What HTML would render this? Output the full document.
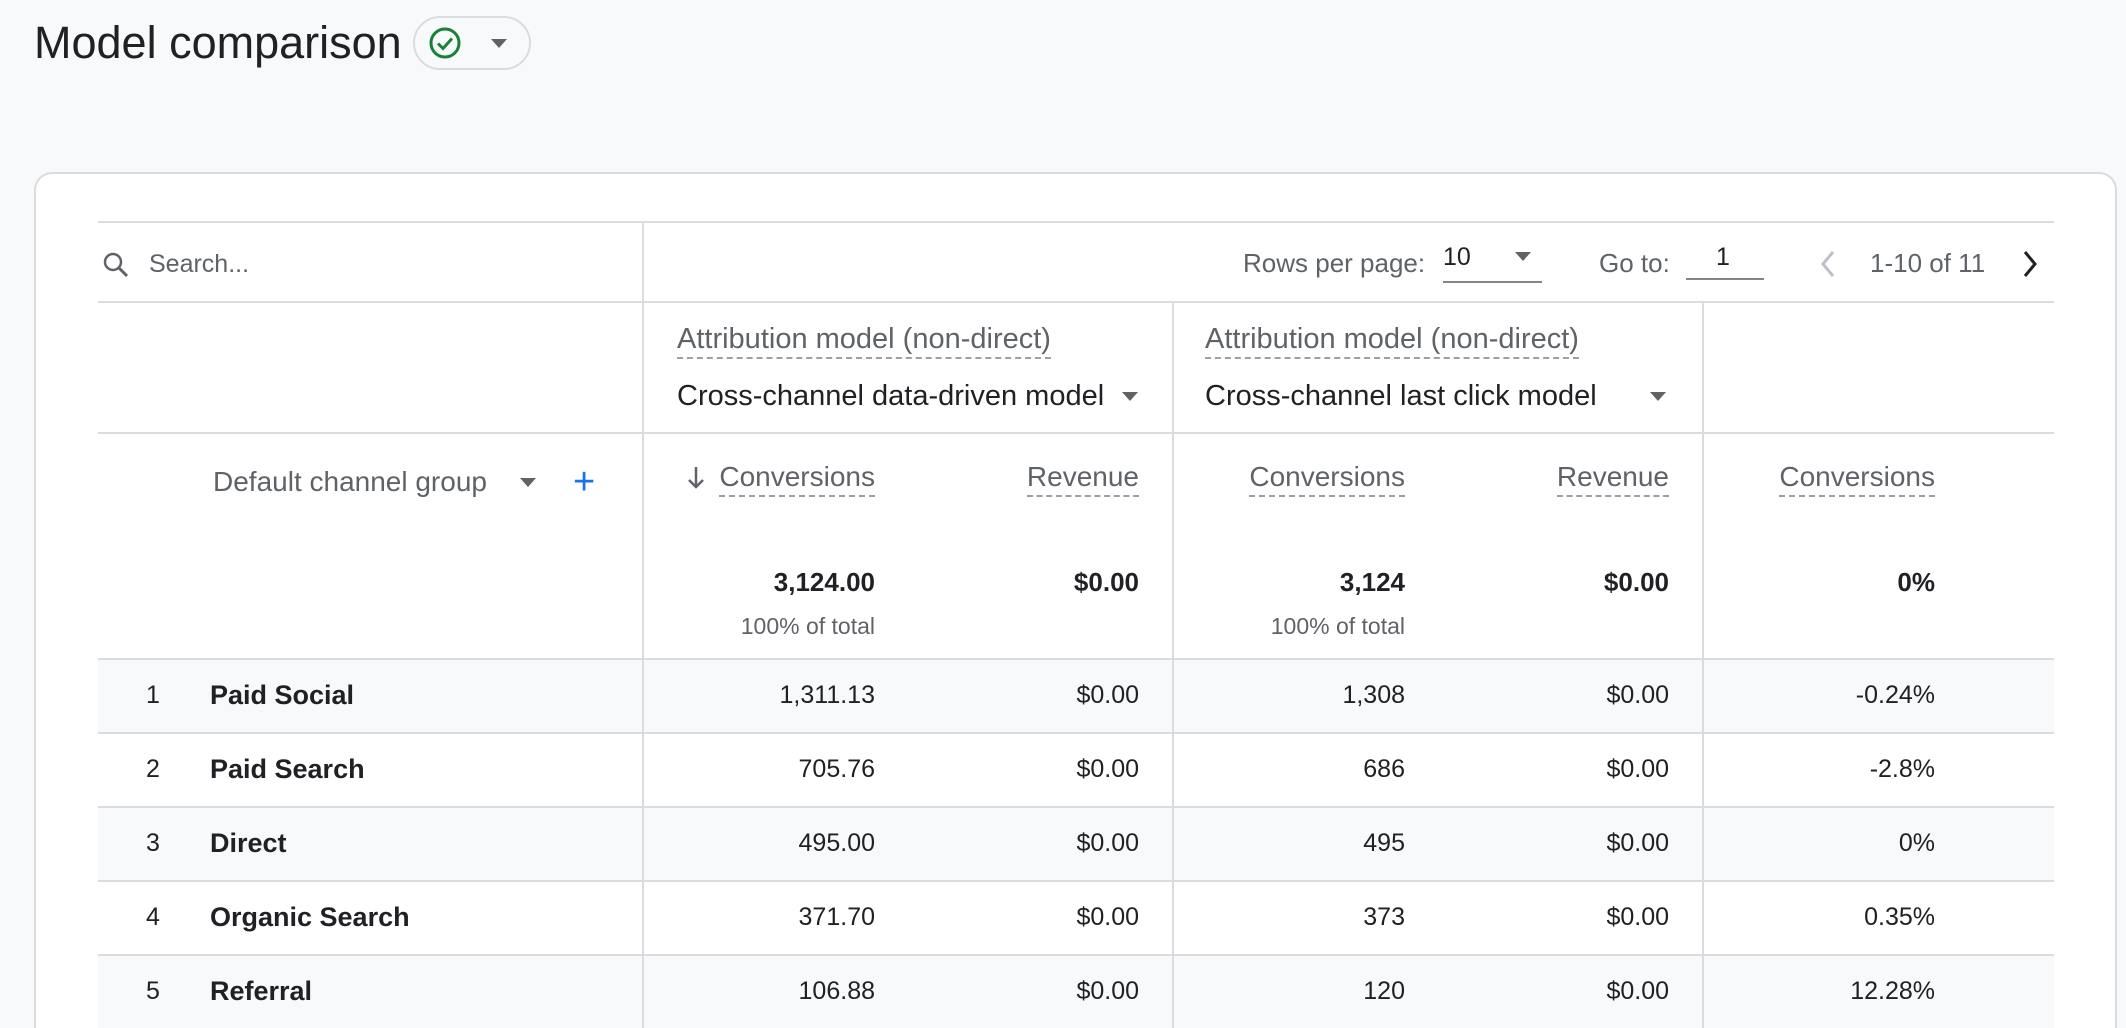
<!DOCTYPE html>
<html style="overflow:hidden;height:1028px"><head><meta charset="utf-8"><style>
*{margin:0;padding:0;box-sizing:border-box}
body{width:2126px;height:1028px;background:#f8f9fa;font-family:"Liberation Sans",sans-serif;position:relative;overflow:hidden;color:#202124}
.a{position:absolute;white-space:nowrap;line-height:30px;height:30px}
.r{text-align:right}
.g{color:#5f6368}
.d{border-bottom:2px dashed #9aa0a6;line-height:30px;height:35px}
.hl{position:absolute;left:98px;width:1956px;height:2px;background:#dadce0}
.vl{position:absolute;width:2px;background:#dadce0}
.tri{position:absolute;width:0;height:0;border-left:8px solid transparent;border-right:8px solid transparent;border-top:9px solid #5f6368}
.row{position:absolute;left:98px;width:1956px;height:74px}
.f25{font-size:25px}
.f28{font-size:28px}
.f30{font-size:29px}
</style></head><body>
<div class="a" style="left:34px;top:19px;font-size:45px;line-height:48px;height:48px">Model comparison</div>
<div style="position:absolute;left:413px;top:16px;width:118px;height:54px;border:2px solid #dadce0;border-radius:27px;background:#f8f9fa"></div>
<svg style="position:absolute;left:428px;top:26px" width="34" height="34" viewBox="0 0 34 34"><circle cx="17" cy="17" r="14" fill="none" stroke="#188038" stroke-width="3"/><path d="M10 17.5l5 5 9-10" fill="none" stroke="#188038" stroke-width="3"/></svg>
<div class="tri" style="left:491px;top:39px"></div>

<div style="position:absolute;left:34px;top:172px;width:2083px;height:856px;background:#fff;border:2px solid #dadce0;border-bottom:none;border-radius:18px 18px 0 0"></div>

<div class="hl" style="top:221px"></div>
<div class="hl" style="top:301px"></div>
<div class="hl" style="top:432px"></div>
<div class="hl" style="top:658px"></div>
<div class="row" style="top:660px;background:#f8f9fa"></div>
<div class="hl" style="top:732px"></div>
<div class="hl" style="top:806px"></div>
<div class="row" style="top:808px;background:#f8f9fa"></div>
<div class="hl" style="top:880px"></div>
<div class="hl" style="top:954px"></div>
<div class="row" style="top:956px;height:72px;background:#f8f9fa"></div>
<div class="vl" style="left:642px;top:222px;height:806px"></div>
<div class="vl" style="left:1172px;top:302px;height:726px"></div>
<div class="vl" style="left:1702px;top:302px;height:726px"></div>

<svg style="position:absolute;left:100px;top:249px" width="32" height="32" viewBox="0 0 32 32"><circle cx="13" cy="13" r="8" fill="none" stroke="#5f6368" stroke-width="2.5"/><path d="M19 19l8 8" stroke="#5f6368" stroke-width="3"/></svg>
<div class="a g f25" style="left:149px;top:249px">Search...</div>
<div class="a g" style="left:1243px;top:248px;font-size:26px">Rows per page:</div>
<div class="a f25" style="left:1443px;top:242px">10</div>
<div style="position:absolute;left:1443px;top:281px;width:99px;height:2px;background:#80868b"></div>
<div class="tri" style="left:1515px;top:252px"></div>
<div class="a g" style="left:1599px;top:248px;font-size:26px">Go to:</div>
<div class="a f25" style="left:1716px;top:242px">1</div>
<div style="position:absolute;left:1686px;top:278px;width:78px;height:2px;background:#80868b"></div>
<svg style="position:absolute;left:1816px;top:248px" width="24" height="32" viewBox="0 0 24 32"><path d="M17 4L7 16l10 12" fill="none" stroke="#bdc1c6" stroke-width="3"/></svg>
<div class="a g" style="left:1870px;top:248px;font-size:26px">1-10 of 11</div>
<svg style="position:absolute;left:2018px;top:248px" width="24" height="32" viewBox="0 0 24 32"><path d="M7 4l10 12L7 28" fill="none" stroke="#202124" stroke-width="3"/></svg>

<div class="a g d f30" style="left:677px;top:324px">Attribution model (non-direct)</div>
<div class="a f30" style="left:677px;top:381px">Cross-channel data-driven model</div>
<div class="tri" style="left:1122px;top:392px"></div>
<div class="a g d f30" style="left:1205px;top:324px">Attribution model (non-direct)</div>
<div class="a f30" style="left:1205px;top:381px">Cross-channel last click model</div>
<div class="tri" style="left:1650px;top:392px"></div>

<div class="a g f28" style="left:213px;top:467px">Default channel group</div>
<div class="tri" style="left:520px;top:478px"></div>
<div class="a" style="left:573px;top:462px;font-size:38px;color:#1a73e8;line-height:40px;height:40px">+</div>
<svg style="position:absolute;left:686px;top:465px" width="20" height="26" viewBox="0 0 20 26"><path d="M10 2v20M3 15l7 7 7-7" fill="none" stroke="#5f6368" stroke-width="2.5"/></svg>
<div class="a g d f28" style="right:1251px;top:462px">Conversions</div>
<div class="a g d f28" style="right:987px;top:462px">Revenue</div>
<div class="a g d f28" style="right:721px;top:462px">Conversions</div>
<div class="a g d f28" style="right:457px;top:462px">Revenue</div>
<div class="a g d f28" style="right:191px;top:462px">Conversions</div>

<div class="a r" style="right:1251px;top:567px;font-weight:bold;font-size:26px">3,124.00</div>
<div class="a r" style="right:987px;top:567px;font-weight:bold;font-size:26px">$0.00</div>
<div class="a r" style="right:721px;top:567px;font-weight:bold;font-size:26px">3,124</div>
<div class="a r" style="right:457px;top:567px;font-weight:bold;font-size:26px">$0.00</div>
<div class="a r" style="right:191px;top:567px;font-weight:bold;font-size:26px">0%</div>
<div class="a r g" style="right:1251px;top:611px;font-size:23px">100% of total</div>
<div class="a r g" style="right:721px;top:611px;font-size:23px">100% of total</div>

<div class="a f25" style="left:146px;top:680px">1</div><div class="a" style="left:210px;top:680px;font-weight:bold;font-size:27px">Paid Social</div>
<div class="a r f25" style="right:1251px;top:680px">1,311.13</div><div class="a r f25" style="right:987px;top:680px">$0.00</div><div class="a r f25" style="right:721px;top:680px">1,308</div><div class="a r f25" style="right:457px;top:680px">$0.00</div><div class="a r f25" style="right:191px;top:680px">-0.24%</div>

<div class="a f25" style="left:146px;top:754px">2</div><div class="a" style="left:210px;top:754px;font-weight:bold;font-size:27px">Paid Search</div>
<div class="a r f25" style="right:1251px;top:754px">705.76</div><div class="a r f25" style="right:987px;top:754px">$0.00</div><div class="a r f25" style="right:721px;top:754px">686</div><div class="a r f25" style="right:457px;top:754px">$0.00</div><div class="a r f25" style="right:191px;top:754px">-2.8%</div>

<div class="a f25" style="left:146px;top:828px">3</div><div class="a" style="left:210px;top:828px;font-weight:bold;font-size:27px">Direct</div>
<div class="a r f25" style="right:1251px;top:828px">495.00</div><div class="a r f25" style="right:987px;top:828px">$0.00</div><div class="a r f25" style="right:721px;top:828px">495</div><div class="a r f25" style="right:457px;top:828px">$0.00</div><div class="a r f25" style="right:191px;top:828px">0%</div>

<div class="a f25" style="left:146px;top:902px">4</div><div class="a" style="left:210px;top:902px;font-weight:bold;font-size:27px">Organic Search</div>
<div class="a r f25" style="right:1251px;top:902px">371.70</div><div class="a r f25" style="right:987px;top:902px">$0.00</div><div class="a r f25" style="right:721px;top:902px">373</div><div class="a r f25" style="right:457px;top:902px">$0.00</div><div class="a r f25" style="right:191px;top:902px">0.35%</div>

<div class="a f25" style="left:146px;top:976px">5</div><div class="a" style="left:210px;top:976px;font-weight:bold;font-size:27px">Referral</div>
<div class="a r f25" style="right:1251px;top:976px">106.88</div><div class="a r f25" style="right:987px;top:976px">$0.00</div><div class="a r f25" style="right:721px;top:976px">120</div><div class="a r f25" style="right:457px;top:976px">$0.00</div><div class="a r f25" style="right:191px;top:976px">12.28%</div>
</body></html>
